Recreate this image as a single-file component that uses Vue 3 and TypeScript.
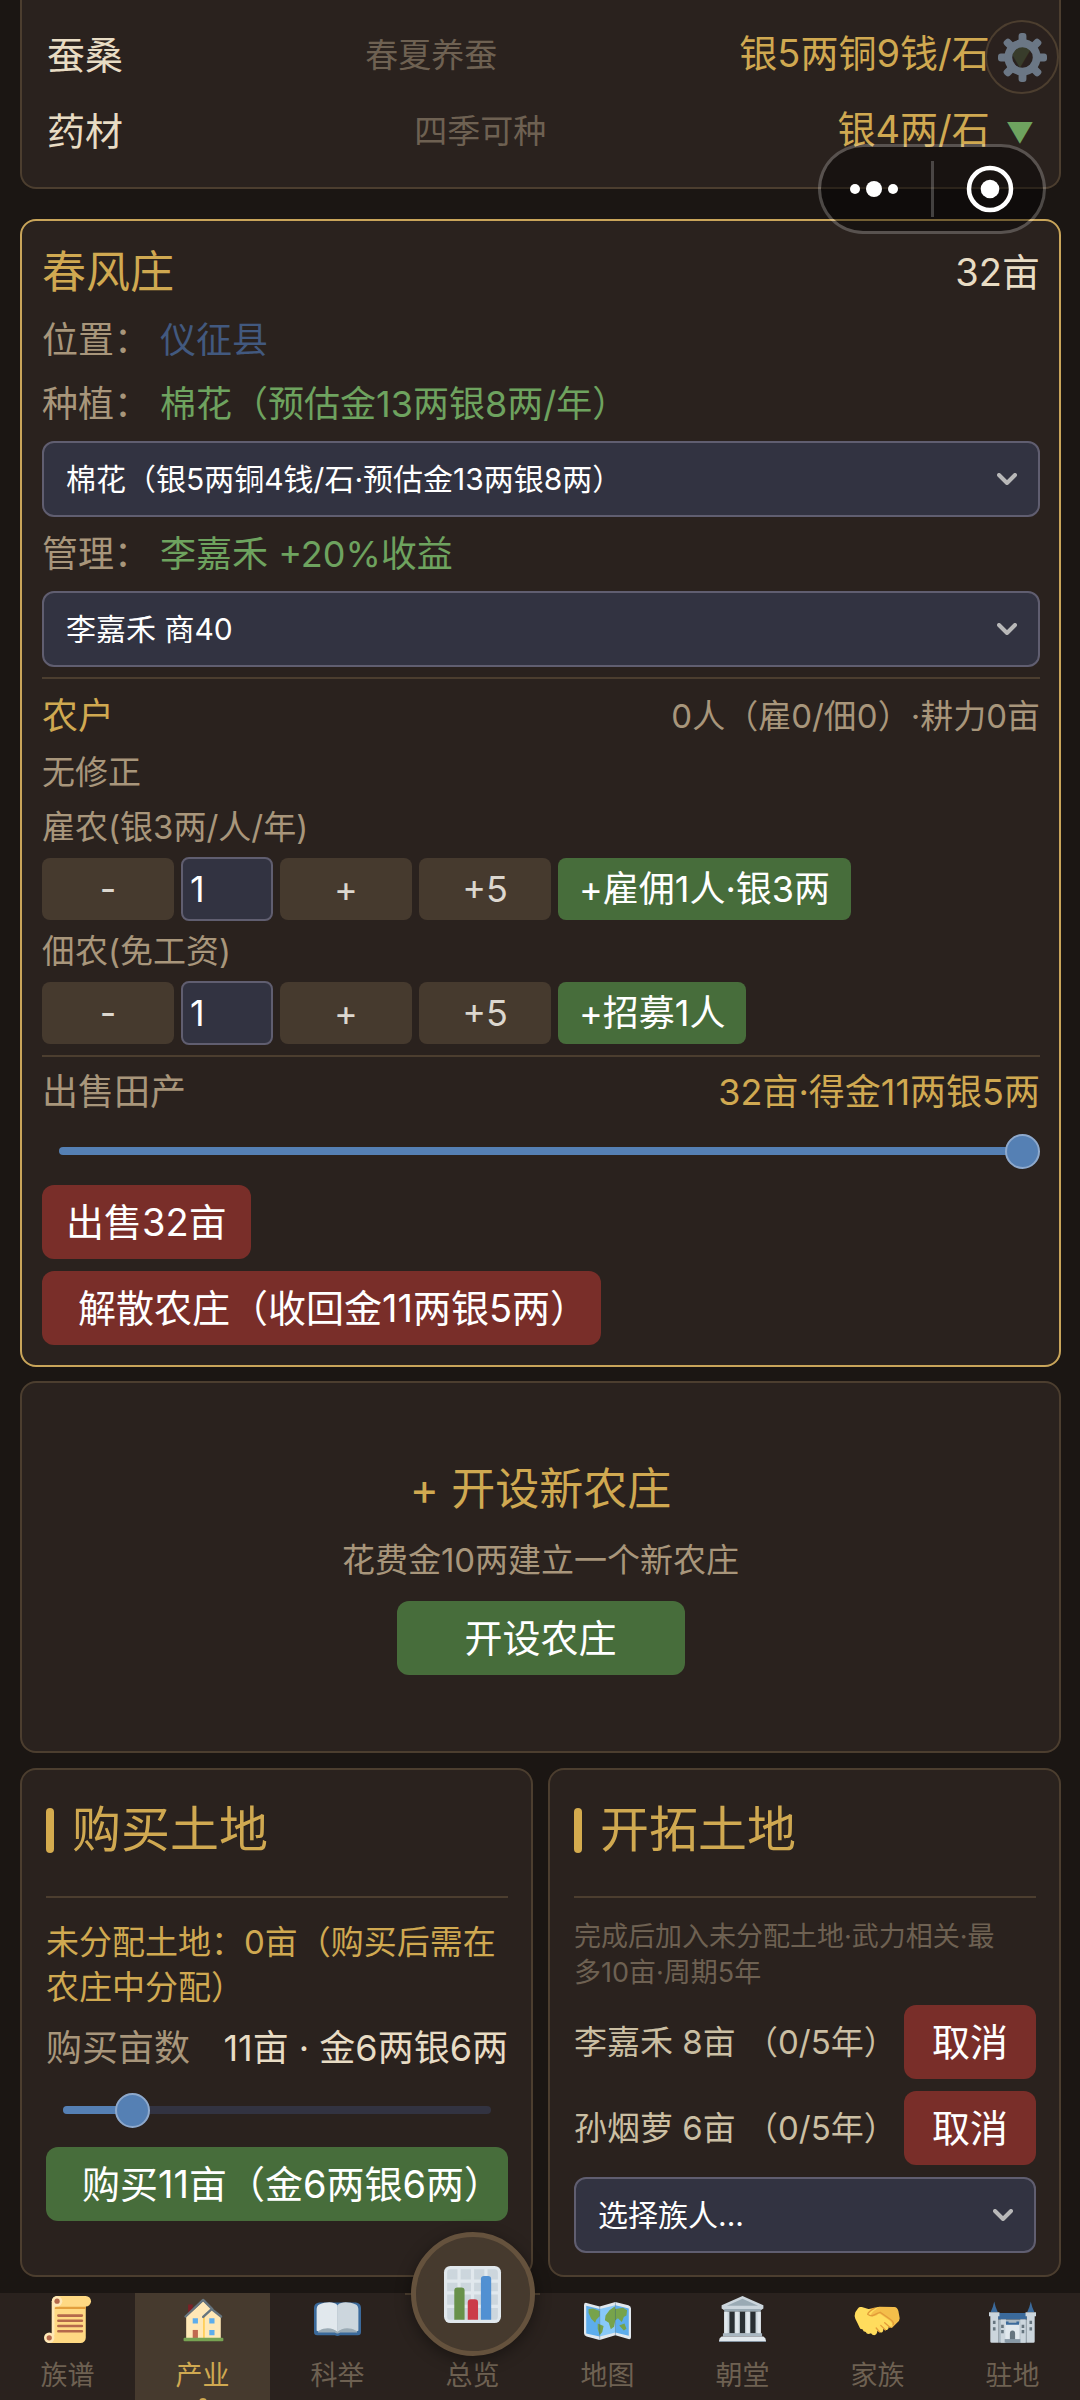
<script setup lang="ts">
import { ref, computed } from 'vue'

interface Crop { name: string; season: string; price: string }
interface Labor { id: string; label: string; action: string }
interface Task { name: string; area: string; progress: string }
interface Tab { id: string; label: string }

const crops: Crop[] = [
  { name: '蚕桑', season: '春夏养蚕', price: '银5两铜9钱/石' },
  { name: '药材', season: '四季可种', price: '银4两/石' },
]

const labor: Labor[] = [
  { id: 'hire', label: '雇农(银3两/人/年)', action: '+雇佣1人·银3两' },
  { id: 'tenant', label: '佃农(免工资)', action: '+招募1人' },
]

const tasks: Task[] = [
  { name: '李嘉禾', area: '8亩', progress: '（0/5年）' },
  { name: '孙烟萝', area: '6亩', progress: '（0/5年）' },
]

const tabs: Tab[] = [
  { id: 'scroll', label: '族谱' },
  { id: 'house', label: '产业' },
  { id: 'book', label: '科举' },
  { id: 'chart', label: '总览' },
  { id: 'map', label: '地图' },
  { id: 'court', label: '朝堂' },
  { id: 'clan', label: '家族' },
  { id: 'castle', label: '驻地' },
]

const active = ref('house')
const counts = ref<Record<string, number>>({ hire: 1, tenant: 1 })
const sellArea = ref(32)
const buyArea = ref(11)
const buyMax = 63
const buyFill = computed(() => `${((buyArea.value - 1) / (buyMax - 1)) * 100}%`)
const sellFill = computed(() => `${(sellArea.value / 32) * 100}%`)

function step(id: string, by: number) {
  counts.value[id] = Math.max(1, counts.value[id] + by)
}
</script>

<template>
  <div class="page">
    <main class="content">
      <section class="card prices">
        <div v-for="c in crops" :key="c.name" class="price-row">
          <span class="crop">{{ c.name }}</span>
          <span class="season">{{ c.season }}</span>
          <span class="price">{{ c.price }}<span class="down">▼</span></span>
        </div>
      </section>

      <section class="card farm">
        <header class="split farm-head">
          <h2>春风庄</h2>
          <span class="acres">32亩</span>
        </header>
        <p class="info"><span class="key">位置：</span><span class="place">仪征县</span></p>
        <p class="info"><span class="key">种植：</span><span class="good">棉花（预估金13两银8两/年）</span></p>
        <div class="select">
          <select aria-label="种植">
            <option>棉花（银5两铜4钱/石·预估金13两银8两）</option>
          </select>
          <svg viewBox="0 0 20 12" aria-hidden="true"><path d="M2 2l8 8 8-8" /></svg>
        </div>
        <p class="info"><span class="key">管理：</span><span class="good">李嘉禾 +20%收益</span></p>
        <div class="select">
          <select aria-label="管理">
            <option>李嘉禾 商40</option>
          </select>
          <svg viewBox="0 0 20 12" aria-hidden="true"><path d="M2 2l8 8 8-8" /></svg>
        </div>

        <div class="block labor">
          <div class="split labor-head">
            <h3>农户</h3>
            <span class="small">0人（雇0/佃0）·耕力0亩</span>
          </div>
          <p class="small">无修正</p>
          <template v-for="l in labor" :key="l.id">
            <label class="small" :for="l.id">{{ l.label }}</label>
            <div class="stepper">
              <button type="button" class="step" @click="step(l.id, -1)">-</button>
              <input :id="l.id" v-model.number="counts[l.id]" type="text" inputmode="numeric" />
              <button type="button" class="step" @click="step(l.id, 1)">+</button>
              <button type="button" class="step" @click="step(l.id, 5)">+5</button>
              <button type="button" class="hire">{{ l.action }}</button>
            </div>
          </template>
        </div>

        <div class="block sell">
          <div class="split sell-head">
            <label class="key" for="sell">出售田产</label>
            <span class="gold">32亩·得金11两银5两</span>
          </div>
          <div class="slider">
            <div class="track"><div class="fill" :style="{ width: sellFill }"></div></div>
            <input id="sell" v-model.number="sellArea" type="range" min="0" max="32" />
          </div>
          <div class="actions">
            <button type="button" class="btn red sell-btn">出售32亩</button>
            <button type="button" class="btn red disband">解散农庄（收回金11两银5两）</button>
          </div>
        </div>
      </section>

      <section class="card create">
        <h2>+ 开设新农庄</h2>
        <p class="small">花费金10两建立一个新农庄</p>
        <button type="button" class="btn green open">开设农庄</button>
      </section>

      <div class="columns">
        <section class="card land purchase">
          <h2 class="land-title">购买土地</h2>
          <p class="unassigned">未分配土地：0亩（购买后需在农庄中分配）</p>
          <div class="split buy-head">
            <label class="key" for="buy">购买亩数</label>
            <span class="cream">11亩 · 金6两银6两</span>
          </div>
          <div class="slider">
            <div class="track"><div class="fill" :style="{ width: buyFill }"></div></div>
            <input id="buy" v-model.number="buyArea" type="range" min="1" :max="buyMax" />
          </div>
          <button type="button" class="btn green buy">购买11亩（金6两银6两）</button>
        </section>

        <section class="card land">
          <h2 class="land-title">开拓土地</h2>
          <p class="note">完成后加入未分配土地·武力相关·最多10亩·周期5年</p>
          <div v-for="t in tasks" :key="t.name" class="split task">
            <span>{{ t.name }} {{ t.area }} {{ t.progress }}</span>
            <button type="button" class="btn red cancel">取消</button>
          </div>
          <div class="select">
            <select aria-label="选择族人">
              <option>选择族人...</option>
            </select>
            <svg viewBox="0 0 20 12" aria-hidden="true"><path d="M2 2l8 8 8-8" /></svg>
          </div>
        </section>
      </div>
    </main>

    <button type="button" class="gear" aria-label="设置">
      <svg viewBox="0 0 50 50" aria-hidden="true">
        <g fill="#6b7785">
          <rect v-for="a in 8" :key="a" x="21" y="0" width="8" height="14" rx="3" :transform="`rotate(${a * 45} 25 25)`" />
        </g>
        <circle cx="25" cy="25" r="14.5" fill="none" stroke="#6b7785" stroke-width="8" />
      </svg>
    </button>

    <div class="capsule">
      <button type="button" class="more" aria-label="更多">
        <svg width="50" height="20" viewBox="0 0 50 20" aria-hidden="true">
          <g fill="#fff"><circle cx="6" cy="10" r="5" /><circle cx="25" cy="10" r="8" /><circle cx="44" cy="10" r="5" /></g>
        </svg>
      </button>
      <i></i>
      <button type="button" class="close" aria-label="关闭">
        <svg width="48" height="48" viewBox="0 0 48 48" aria-hidden="true">
          <circle cx="24" cy="24" r="21" fill="none" stroke="#fff" stroke-width="4.5" /><circle cx="24" cy="24" r="9.3" fill="#fff" />
        </svg>
      </button>
    </div>

    <nav class="tabs">
      <a v-for="t in tabs" :key="t.id" href="#" class="tab" :class="{ active: t.id === active, center: t.id === 'chart' }" @click.prevent="active = t.id">
        <span class="icon">
          <svg viewBox="0 0 36 36" aria-hidden="true">
            <g v-if="t.id === 'scroll'">
              <path fill="#FFD983" d="M6 4h26v28a4 4 0 0 1-4 4H3V30h3z" />
              <path fill="#E39F3D" d="M9 8h23v2H8z" />
              <path fill="#FFE8B6" d="M10 0a4 4 0 0 0-4 4v26h2V8h2z" />
              <path fill="#FFD983" d="M9.500 0H32a4 4 0 0 1 0 8H9.500z" />
              <circle cx="10" cy="4" r="4" fill="#FFE8B6" /><circle cx="10" cy="4" r="2" fill="#B5694B" />
              <circle cx="4" cy="32" r="4" fill="#FFE8B6" /><circle cx="4" cy="32" r="2" fill="#B5694B" />
              <path stroke="#B5694B" stroke-width="2" stroke-linecap="round" d="M11 15h18M11 19h18M11 23h18M11 27h18" />
            </g>
            <g v-else-if="t.id === 'house'">
              <path fill="#7c2027" d="M7 6.500h3.500V14H7z" />
              <path fill="#FFE8B6" d="M18.500 4L5.500 16v16.500H32V16l-7-6z" />
              <path fill="#FFCC4D" d="M18.500 16h1.200v16.500h-1.200z" />
              <path fill="none" stroke="#66757F" stroke-width="1.800" stroke-linejoin="round" stroke-linecap="round" d="M5 15.700L18.500 3l7 7M18.500 16l6.500-6 7.200 5.700" />
              <path fill="#5DADEC" d="M10.500 17h4v4h-4zM23.200 17h4v4h-4zM23.200 26h4v4h-4z" />
              <path fill="#C1694F" d="M10.500 26h4v6.500h-4z" />
              <rect x="3.500" y="32" width="30.500" height="2.600" rx=".8" fill="#77A353" />
            </g>
            <g v-else-if="t.id === 'book'">
              <path fill="#3B6A9B" d="M4 5h28a4 4 0 0 1 4 4v18.500a2.500 2.500 0 0 1-2.500 2.500H20q-2 1.200-4 0H2.500A2.500 2.500 0 0 1 0 27.500V9a4 4 0 0 1 4-4z" />
              <path fill="#99AAB5" d="M3 8h30v20H20q-2 1.500-4 0H3z" />
              <path fill="#E1E8ED" d="M18 7C15 4 9 4.500 4 6.500q-2 1-2 4V26q0 1.500 2 .5c5-2 11-1 14 1z" />
              <path fill="#CCD6DD" d="M18 7c3-3 9-2.500 14-.5q2 1 2 4V26q0 1.500-2 .5c-5-2-11-1-14 1z" />
              <path fill="#9AAAB4" d="M4 26.500c5-3 11-2 14 1 3-3 9-4 14-1-5-1-11-.5-14 1.500-3-2-9-2.500-14-1.500z" />
            </g>
            <g v-else-if="t.id === 'chart'">
              <rect width="36" height="36" rx="4" fill="#E1E8ED" />
              <path fill="#CCD6DD" d="M4 2h4.500v6.500H2V4a2 2 0 0 1 2-2zM10.500 2H17v6.500h-6.500zM19 2h6.500v6.500H19zM27.500 2H32a2 2 0 0 1 2 2v4.500h-6.500zM2 10.500h6.500V16H2zM10.500 10.500H17V16h-6.500zM19 10.500h6.500V16H19zM27.500 10.500H34V16h-6.500zM2 18h6.500v6.500H2zM10.500 18H17v6.500h-6.500zM19 18h6.500v6.500H19zM27.500 18H34v6.500h-6.500zM2 26.500h6.500V34H4a2 2 0 0 1-2-2zM10.500 26.500H17V34h-6.500zM19 26.500h6.500V34H19zM27.500 26.500H34V32a2 2 0 0 1-2 2h-4.500z" />
              <path fill="#68914A" d="M6.500 34V15.500a2 2 0 0 1 2-2H11a2 2 0 0 1 2 2V34z" />
              <path fill="#CB3B48" d="M15 34V23a2 2 0 0 1 2-2h2.500a2 2 0 0 1 2 2v11z" />
              <path fill="#5190D2" d="M23.300 34V8.300a2 2 0 0 1 2-2h2.500a2 2 0 0 1 2 2V34z" />
            </g>
            <g v-else-if="t.id === 'map'">
              <path fill="#E1E8ED" d="M0 7Q0 4.800 2 5.300L12 8l12-3.500 10 2.500q2 .7 2 2.500v22q0 2-2 1.500L24 30l-12 3.700L2 31q-2-.7-2-2.500z" />
              <path fill="#5DADEC" d="M1.700 7.500L12 10v21L1.700 28.700zM24 7l10.300 2.500v21L24 28z" />
              <path fill="#88C9F9" d="M12 10l12-3v21l-12 3z" />
              <path fill="#77A34B" d="M3.500 10l3.500-.5 5 2v4l-2.500 2.500-1 2.500-3-3L3.500 13zM10.500 21l4.500 2-1 4.500-2 2.500-1.500-5zM16.500 15l3-4 4-3 .5 2 6-1 3 2-.5 4-2 1-1.500 4-3-3-2 1.500-1 5-2.500 2-1.500-5-3-2zM27 22.500l4-1.500 1.500 4-2 1.500z" />
              <path fill="#2b5578" opacity=".4" d="M11.700 8h.7v25.700h-.7zM23.700 4.500h.7V30h-.7z" />
            </g>
            <g v-else-if="t.id === 'court'">
              <path fill="#CCD6DD" d="M18 0L34 7v2.500L32 11H4L2 9.500V7z" />
              <path fill="#9AAAB4" d="M18 2.200L30 7.500H6zM4 10h28v2H4z" />
              <path fill="#CCD6DD" d="M4 12h28v17H4z" />
              <path fill="#E1E8ED" d="M4 12h2.500v17H4zM12.500 12H15v17h-2.500zM21 12h2.500v17H21zM29.500 12H32v17h-2.500z" />
              <path fill="#292F33" d="M8 12h4v16.500H8zM16 12h4v16.500h-4zM24 12h4v16.500h-4z" />
              <path fill="#AAB8C2" d="M3 28.500h30V31H3z" />
              <path fill="#E1E8ED" d="M2 31h32q2 1 2 3.500H0Q0 32 2 31z" />
              <path fill="#8493a0" d="M0 34.500h36v.8H0z" />
            </g>
            <g v-else-if="t.id === 'clan'">
              <path fill="#F4BE4A" d="M9 10.500l6.500-1.500 4-.8 11 .3q2.500-.3 3.500 3l1 5.500q0 2-2 3.500l-4 4-9-3z" />
              <path fill="#FFDC5D" d="M3 9.500q1-1.500 3-1l5 1.500q2 .5 4 0l4-1.500-4.500 3.500q-3 3 0 3.500 3 0 4.500-2.500l8 5.500q3.500 3 2 4.500-1 1-2.500 0 .5 2.500-1.500 3-1.500.3-2.500-1 0 3-2 3-1.500 0-2.500-1.500-.5 3.500-2.500 3.500-1.500 0-2.500-1.500-3 1.500-4-1-2 0-2.500-2-2 .2-2.500-2-1-2-3-6-1-2 0-5z" />
              <path fill="none" stroke="#E39C38" stroke-width="1" stroke-linecap="round" d="M15.500 9.500q-4.500 2.500-5 4.500 2.500 2 5 .5t4.500-2l8 5.500q3 2.500 2 4M23.500 20.500l4 3.500M20.500 22.500l3.500 3.500M17 24.500l2.500 3" />
            </g>
            <g v-else>
              <path fill="#3B6A9B" d="M4 4.300q1 5 2.800 8.200H1.200Q3 9.300 4 4.300zM32 4.300q1 5 2.800 8.200h-5.600q1.800-3.200 2.800-8.200zM7 13h22v5H7z" />
              <path fill="#CCD6DD" d="M0 12.500h8v3H7v20.300H2q-1 0-1-1V15.500H0zM28 12.500h8v3h-1v19.300q0 1-1 1h-5V15.500h-1z" />
              <path fill="#AAB8C2" d="M7 18h22v17.800H7z" /><path fill="#CCD6DD" d="M9 18h4v17.800H9zM24 18h4v17.800h-4z" />
              <path fill="#E1E8ED" d="M12.500 21h11v13h-11z" /><path fill="#3B6A9B" d="M13 19.500h2v1h6v-1h2V22H13z" />
              <path fill="#66757F" d="M16 34v-5a2 2.500 0 0 1 4 0v5zM3 19h2v2.500H3zM3 24h2v2.500H3zM31 19h2v2.500h-2zM31 24h2v2.500h-2zM9.300 22h2v2.500h-2zM9.300 26h2v2.500h-2zM25 22h2v2.500h-2zM25 26h2v2.500h-2z" />
              <path fill="#8899A6" d="M12 33h12v2.800H12z" />
            </g>
          </svg>
        </span>
        <span class="tab-label">{{ t.label }}</span>
      </a>
    </nav>
  </div>
</template>

<style>
body { background: #1b1613; }
</style>

<style scoped>
.page {
  position: relative;
  display: flex;
  flex-direction: column;
  min-height: 100vh;
  box-sizing: border-box;
  background: #1b1613;
  color: #e8dcc4;
  font-family: Inter, "Noto Sans CJK SC", sans-serif;
  font-size: 36px;
  line-height: 50px;
  text-spacing-trim: space-all;
}
.page *, .page *::before { box-sizing: border-box; }
h2, h3, p { margin: 0; font-weight: 400; }
button, input, select { font: inherit; margin: 0; }
button { border: 0; padding: 0; cursor: pointer; white-space: nowrap; }
.content { display: flex; flex-direction: column; padding: 0 19px 16px 20px; }
.card { border: 2px solid #4c3e2f; border-radius: 16px; background: #2a221e; }
.split { display: flex; justify-content: space-between; align-items: center; }

.prices { border-top: 0; border-radius: 0 0 16px 16px; padding: 17px 25px 18px; margin-bottom: 30px; }
.price-row { display: flex; justify-content: space-between; align-items: center; height: 76px; }
.crop { font-size: 38px; }
.season { font-size: 33px; color: #6e6152; }
.price { font-size: 38px; color: #d0a951; }
.down { font-size: 28px; color: #6ea35f; margin-left: 16px; }

.farm { display: flex; flex-direction: column; gap: 10px; border-color: #c9a55a; padding: 19px 19px 20px 20px; margin-bottom: 14px; }
.farm-head { height: 63px; }
.farm-head h2 { font-size: 44px; color: #d0a951; }
.acres { font-size: 38px; }
.info { display: flex; gap: 10px; line-height: 54px; }
.key { color: #a8967b; }
.place { color: #42597f; }
.good { color: #6ea35f; }
.gold { color: #d0a951; }
.cream { color: #e8dcc4; }
.small { font-size: 33px; line-height: 50px; color: #a8967b; }

.select { display: grid; align-items: center; }
.select select {
  grid-area: 1 / 1;
  width: 100%;
  height: 76px;
  padding: 0 60px 0 22px;
  appearance: none;
  border: 2px solid #605e70;
  border-radius: 12px;
  background: #323341;
  color: #fff;
  font-size: 30px;
}
.select svg {
  grid-area: 1 / 1;
  justify-self: end;
  width: 20px;
  height: 12px;
  margin-right: 23px;
  pointer-events: none;
  fill: none;
  stroke: #b8b8b8;
  stroke-width: 4;
  stroke-linecap: round;
  stroke-linejoin: round;
}

.block { display: flex; flex-direction: column; border-top: 2px solid #4c3e2f; padding-top: 10px; }
.labor { gap: 5px; }
.labor-head { height: 53px; }
.labor-head h3 { font-size: 36px; color: #d0a951; }
.stepper { display: flex; align-items: center; gap: 7px; height: 64px; }
.step { width: 132px; height: 62px; border-radius: 8px; background: #463a2e; color: #dcd7cf; }
.stepper input {
  width: 92px;
  height: 64px;
  padding: 0 7px;
  border: 2px solid #605e70;
  border-radius: 8px;
  background: #323341;
  color: #fff;
}
.hire { height: 62px; padding: 0 21px; border-radius: 8px; background: #476d3b; color: #fff; }

.sell { gap: 10px; }
.slider { display: grid; align-items: center; height: 48px; }
.track { grid-area: 1 / 1; height: 8px; margin: 0 17px; border-radius: 4px; background: #323341; overflow: hidden; }
.fill { height: 8px; background: #5580b4; }
.slider input { grid-area: 1 / 1; width: 100%; height: 36px; appearance: none; background: transparent; }
.slider input::-webkit-slider-thumb {
  appearance: none;
  width: 35px;
  height: 35px;
  border: 2px solid #8ea9cc;
  border-radius: 50%;
  background: #5580b4;
}
.actions { display: flex; flex-direction: column; align-items: flex-start; gap: 12px; }
.btn { height: 74px; border-radius: 12px; color: #fff; font-size: 38px; }
.red { background: #792e29; }
.green { background: #476d3b; }
.sell-btn { padding: 0 24px; }
.disband { padding: 0 13px 0 36px; }

.create { display: flex; flex-direction: column; align-items: center; gap: 16px; padding: 76px 20px; margin-bottom: 15px; }
.create h2 { font-size: 44px; line-height: 60px; color: #d0a951; }
.open { width: 288px; }

.columns { display: grid; grid-template-columns: 1fr 1fr; gap: 15px; }
.land { display: flex; flex-direction: column; gap: 12px; min-width: 0; padding: 25px 23px 22px 24px; }
.purchase { gap: 13px; }
.land-title {
  display: flex;
  align-items: center;
  gap: 18px;
  padding-bottom: 31px;
  margin-bottom: 9px;
  border-bottom: 2px solid #4c3e2f;
  font-size: 49px;
  line-height: 70px;
  color: #d0a951;
}
.land-title::before { content: ""; width: 8px; height: 45px; border-radius: 4px; background: #d4ab4e; }
.unassigned { font-size: 33px; line-height: 45px; color: #d0a951; }
.buy-head { white-space: nowrap; }
.buy { width: 100%; padding-left: 36px; text-align: left; }
.note { font-size: 27px; line-height: 36px; color: #6e6152; margin-bottom: 2px; padding-right: 24px; }
.task { font-size: 33px; color: #cbbfa3; white-space: nowrap; }
.cancel { width: 132px; }

.gear {
  position: absolute;
  top: 20px;
  right: 21px;
  display: grid;
  place-items: center;
  width: 74px;
  height: 74px;
  border: 2px solid #4c3e2f;
  border-radius: 50%;
  background: rgba(42, 34, 30, 0.8);
}
.gear svg { width: 49px; height: 49px; }
.capsule {
  position: absolute;
  top: 144px;
  right: 34px;
  display: flex;
  align-items: center;
  width: 228px;
  height: 90px;
  border: 3px solid rgba(255, 255, 255, 0.22);
  border-radius: 45px;
  background: rgba(0, 0, 0, 0.42);
  background-clip: padding-box;
}
.capsule button { flex: 1; display: grid; place-items: center; height: 84px; background: none; }
.capsule .more { padding-right: 4px; }
.capsule .close { padding-left: 4px; }
.capsule i { width: 3px; height: 56px; background: rgba(255, 255, 255, 0.22); }

.tabs { display: grid; grid-template-columns: repeat(8, 1fr); height: 107px; margin-top: auto; background: #2a221e; }
.tab { position: relative; display: flex; flex-direction: column; align-items: center; gap: 15px; padding-top: 2px; color: #6e6152; text-decoration: none; }
.icon { display: grid; place-items: center; height: 48px; }
.icon svg { width: 47px; height: 47px; overflow: visible; }
.tab-label { font-size: 27px; line-height: 36px; }
.active { background: #463a2e; color: #d0a951; overflow: hidden; }
.active::after { content: ""; position: absolute; bottom: -6px; width: 8px; height: 8px; border-radius: 50%; background: #d0a951; }
.center { border-top: 2px solid #4c3e2f; padding-top: 63px; }
.center .icon {
  position: absolute;
  top: -63px;
  width: 124px;
  height: 124px;
  border: 5px solid #65523d;
  border-radius: 50%;
  background: #463a2e;
  box-shadow: 0 4px 16px rgba(0, 0, 0, 0.4);
}
.center .icon svg { width: 57px; height: 57px; }
</style>
